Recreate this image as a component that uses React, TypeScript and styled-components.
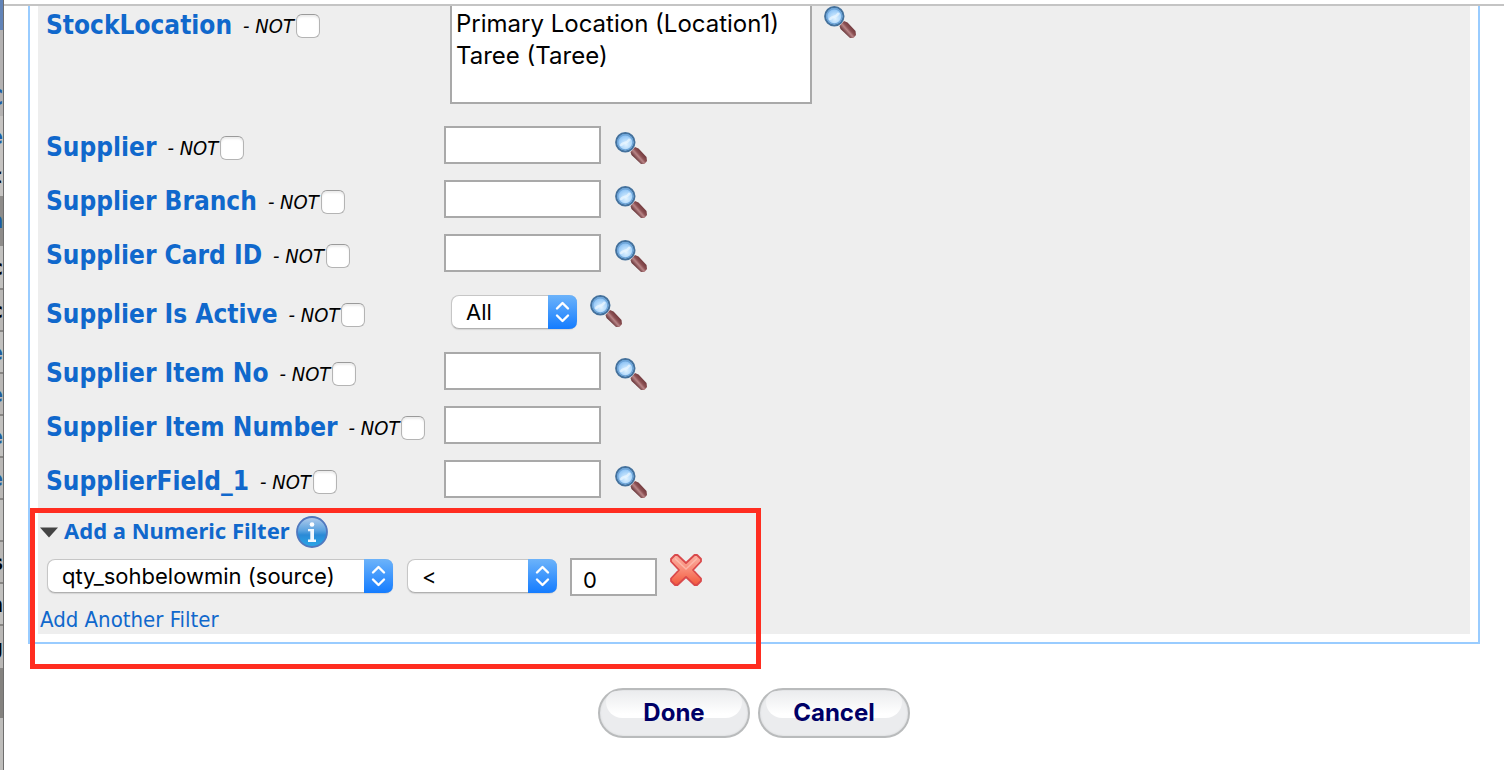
import React from "react";
import styled, { createGlobalStyle } from "styled-components";

const Global = createGlobalStyle`
  * { box-sizing: border-box; }
  body { margin: 0; background: #fff; font-family: "DejaVu Sans Condensed", Tahoma, "DejaVu Sans", sans-serif; color: #000; overflow-x: hidden; }
`;

const Page = styled.div`
  display: flex;
  min-height: 100vh;
`;
const Backdrop = styled.div`
  flex: none;
  width: 4px;
  border-right: 1px solid #6e6e6e;
  background: #bebdbb;
  overflow: hidden;
  display: flex;
  flex-direction: column;
`;
const Strip = styled.div<{ $h: number; $bg: string; $ink?: string; $line?: boolean }>`
  flex: none;
  height: ${(p) => p.$h}px;
  line-height: ${(p) => p.$h}px;
  background: ${(p) => p.$bg};
  color: ${(p) => p.$ink ?? "#000"};
  border-bottom: ${(p) => (p.$line ? "2px solid #888684" : "0")};
  font-size: 22px;
  font-weight: 700;
  white-space: nowrap;
  display: flex;
  justify-content: flex-end;
`;
const Dialog = styled.main`
  flex: 1;
  min-width: 0;
`;
const TopEdge = styled.div`
  height: 6px;
  border-bottom: 2px solid #c4c4c4;
`;
const Frame = styled.div`
  margin: 0 24px;
  padding: 0 8px 8px;
  border: 2px solid #99ccff;
  border-top: 0;
`;
const Panel = styled.div`
  background: #eee;
`;
const Row = styled.div<{ $h: number; $top?: boolean }>`
  display: grid;
  grid-template-columns: 398px 1fr;
  align-items: ${(p) => (p.$top ? "start" : "center")};
  height: ${(p) => p.$h}px;
  padding-left: 8px;
`;
const LabelCell = styled.div<{ $top?: boolean }>`
  display: flex;
  align-items: center;
  height: 40px;
  margin-top: ${(p) => (p.$top ? "0" : "6px")};
  white-space: nowrap;
`;
const Name = styled.span`
  color: #1068cc;
  font-size: 26px;
  line-height: 36px;
  padding-bottom: 2px;
  font-weight: 700;
`;
const Not = styled.label`
  display: flex;
  align-items: center;
  margin-left: 11px;
  font-size: 20px;
  font-style: italic;
`;
const Tick = styled.input`
  appearance: none;
  width: 24px;
  height: 24px;
  margin: 0 0 0 2px;
  border: 1px solid #b4b4b4;
  border-top-color: #9a9a9a;
  border-radius: 6px;
  background: #fff;
  box-shadow: inset 0 2px 2px #ececec;
`;
const FieldCell = styled.div<{ $inset?: boolean; $gap: number }>`
  display: flex;
  align-items: flex-start;
  gap: ${(p) => p.$gap}px;
  padding-left: ${(p) => (p.$inset ? 7 : 0)}px;
`;
const TextBox = styled.input<{ $w: number }>`
  width: ${(p) => p.$w}px;
  height: 38px;
  border: 2px solid #a9a9a9;
  border-radius: 0;
  padding: 6px 11px 0;
  background: #fff;
  font: 22px Inter, sans-serif;
`;
const ListBox = styled.select`
  width: 362px;
  height: 98px;
  margin-left: -1px;
  border: 2px solid #a9a9a9;
  border-top: 0;
  border-radius: 0;
  padding: 3px 0 0;
  background: #fff;
  color: #000;
  font: 24px Inter, sans-serif;
  overflow: hidden;
  outline: none;
  option { height: 32px; line-height: 32px; padding: 0 4px; }
`;
const IconButton = styled.button<{ $drop?: number }>`
  width: 32px;
  height: 32px;
  margin-top: ${(p) => p.$drop ?? 0}px;
  padding: 0;
  border: 0;
  background: none;
  svg { display: block; }
`;
const Picker = styled.span<{ $w: number }>`
  position: relative;
  display: inline-flex;
  width: ${(p) => p.$w}px;
  height: 34px;
  select {
    appearance: none;
    width: 100%;
    height: 34px;
    border: 1px solid #c6c6c6;
    border-bottom-color: #b0b0b0;
    border-radius: 8px;
    padding: 0 40px 0 14px;
    background: #fff;
    color: #000;
    font: 22px Inter, sans-serif;
    box-shadow: 0 1px 1px #d4d4d4;
  }
  svg { position: absolute; top: 0; right: 0; pointer-events: none; }
`;
const NumericFilter = styled.section`
  position: relative;
  height: 128px;
  padding-left: 2px;
`;
const Highlight = styled.div`
  position: absolute;
  top: 2px;
  left: -8px;
  width: 731px;
  height: 161px;
  border: 5px solid #ff2d20;
  pointer-events: none;
`;
const FilterTitle = styled.h2`
  display: flex;
  align-items: center;
  gap: 6px;
  height: 48px;
  margin: 0;
  padding-top: 4px;
  color: #1068cc;
  font: 700 22px "Noto Sans", sans-serif;
  line-height: 32px;
  span { padding-bottom: 4px; }
`;
const FilterRow = styled.div`
  display: flex;
  align-items: flex-start;
  gap: 13px;
  height: 52px;
  padding-left: 7px;
  ${Picker} { margin-top: 5px; }
  ${Picker} + ${Picker} { margin-left: 1px; }
  ${TextBox} { margin-top: 4px; }
`;
const AddLink = styled.a`
  display: block;
  color: #1068cc;
  font-size: 22px;
  line-height: 28px;
  text-decoration: none;
`;
const Actions = styled.div`
  display: flex;
  justify-content: center;
  gap: 8px;
  padding: 44px 0 32px;
`;
const Pill = styled.button`
  position: relative;
  width: 152px;
  height: 50px;
  border: 2px solid #b9bbbc;
  border-radius: 25px;
  padding: 0 0 2px;
  background: #ebecee;
  color: #000066;
  font: 700 24px Inter, sans-serif;
  box-shadow: inset 0 0 2px #d0d2d3;
  &::before {
    content: "";
    position: absolute;
    inset: 1px 6px 18px;
    border-radius: 16px 16px 24px 24px;
    background: linear-gradient(#ebecee, #fff 85%);
  }
  span { position: relative; }
`;

const Magnifier = () => (
  <svg width="32" height="32" viewBox="0 0 32 32" aria-hidden="true">
    <defs>
      <radialGradient id="lens" cx="55%" cy="62%" r="60%">
        <stop offset="0" stopColor="#e2f3ff" />
        <stop offset="0.5" stopColor="#b0d8fb" />
        <stop offset="1" stopColor="#7ab6f0" />
      </radialGradient>
      <linearGradient id="grip" gradientUnits="userSpaceOnUse" x1="20" y1="27" x2="28" y2="20">
        <stop offset="0" stopColor="#5e2c30" />
        <stop offset="0.4" stopColor="#b98587" />
        <stop offset="0.6" stopColor="#8d5154" />
        <stop offset="1" stopColor="#6d3539" />
      </linearGradient>
    </defs>
    <path d="M15.500 20 L20 15 L23.500 16.500 L31.500 25 L32 29 L29.500 32 L26 32 L16.500 23 Z" fill="url(#grip)" />
    <circle cx="10.300" cy="10.300" r="9.200" fill="url(#lens)" stroke="#44719c" strokeWidth="2" />
    <circle cx="10.300" cy="10.300" r="7.600" fill="none" stroke="#6ea5d8" strokeWidth="1.400" />
    <path d="M6 14 C7 9 10 14 15 7" fill="none" stroke="#eef8ff" strokeWidth="2.600" opacity="0.7" />
  </svg>
);

const Stepper = () => (
  <svg width="29" height="34" viewBox="0 0 29 34" aria-hidden="true">
    <defs>
      <linearGradient id="step" x1="0" y1="0" x2="0" y2="1">
        <stop offset="0" stopColor="#6cb3fa" />
        <stop offset="1" stopColor="#147cff" />
      </linearGradient>
    </defs>
    <path d="M0 0 H21 Q29 0 29 8 V26 Q29 34 21 34 H0 Z" fill="url(#step)" />
    <path d="M9 13.500 L14.500 8 L20 13.500 M9 20.500 L14.500 26 L20 20.500" fill="none" stroke="#fff" strokeWidth="2.400" strokeLinecap="round" strokeLinejoin="round" />
  </svg>
);

const Info = () => (
  <svg width="32" height="32" viewBox="0 0 32 32" aria-hidden="true">
    <defs>
      <linearGradient id="info" x1="0" y1="0" x2="0" y2="1">
        <stop offset="0" stopColor="#b4cdec" />
        <stop offset="0.45" stopColor="#5ba3e0" />
        <stop offset="0.6" stopColor="#2a8ad6" />
        <stop offset="1" stopColor="#2aa8e8" />
      </linearGradient>
    </defs>
    <circle cx="16" cy="16" r="15" fill="url(#info)" stroke="#5078be" strokeWidth="1.800" />
    <circle cx="16" cy="8.500" r="2.300" fill="#fff" />
    <path d="M12 13 H18 V23.500 H20 V26 H12 V23.500 H14.300 V15.200 H12 Z" fill="#f2f9ff" />
  </svg>
);

const Cross = () => (
  <svg width="32" height="32" viewBox="0 0 32 32" aria-hidden="true">
    <defs>
      <linearGradient id="cross" x1="0" y1="0" x2="0" y2="1">
        <stop offset="0" stopColor="#fbb0a2" />
        <stop offset="0.5" stopColor="#f98a75" />
        <stop offset="1" stopColor="#f2583c" />
      </linearGradient>
    </defs>
    <path d="M5 1 L7.500 1 L16 9 L24.500 1 L27 1 L31 5 L31 7.500 L23 16 L31 24.500 L31 27 L27 31 L24.500 31 L16 23 L7.500 31 L5 31 L1 27 L1 24.500 L9 16 L1 7.500 L1 5 Z" fill="url(#cross)" stroke="#d9494b" strokeWidth="1.800" strokeLinejoin="round" />
    <path d="M5 4.500 L16 15 L27 4.500" fill="none" stroke="#fdc4b8" strokeWidth="1.500" opacity="0.7" />
  </svg>
);

const Triangle = () => (
  <svg width="18" height="11" viewBox="0 0 18 11" aria-hidden="true">
    <path d="M0 0.500 H18 L9 10.500 Z" fill="#444" />
  </svg>
);

const NotTick = ({ name }: { name: string }) => (
  <Not>
    - NOT
    <Tick type="checkbox" aria-label={`${name} not`} />
  </Not>
);

const Search = ({ name, drop }: { name: string; drop?: number }) => (
  <IconButton type="button" aria-label={`Search ${name}`} $drop={drop}>
    <Magnifier />
  </IconButton>
);

const fields = [
  { name: "Supplier", search: true },
  { name: "Supplier Branch", search: true },
  { name: "Supplier Card ID", search: true },
  { name: "Supplier Is Active", search: true, choice: true },
  { name: "Supplier Item No", search: true },
  { name: "Supplier Item Number", search: false },
  { name: "SupplierField_1", search: true },
];

const strips: { h: number; bg: string; ink?: string; text?: string; line?: boolean }[] = [
  { h: 30, bg: "#6284b8" },
  { h: 50, bg: "#b4b2b2" },
  { h: 36, bg: "#b4b2b2", ink: "#1a5ba8", text: "C" },
  { h: 42, bg: "#c6c4c2", ink: "#1a5ba8", text: "e" },
  { h: 38, bg: "#c6c4c2", text: "<" },
  { h: 50, bg: "#8e8c8a", ink: "#1a5ba8", text: "m" },
  { h: 44, bg: "#c2c1bf", text: "c", line: true },
  { h: 42, bg: "#bab8b6", text: "c", line: true },
  { h: 42, bg: "#c2c1bf", ink: "#1f5c9c", text: "e", line: true },
  { h: 42, bg: "#bab8b6", ink: "#1f5c9c", text: "e", line: true },
  { h: 42, bg: "#c2c1bf", ink: "#1f5c9c", text: "e", line: true },
  { h: 42, bg: "#bab8b6", ink: "#1f5c9c", text: "e", line: true },
  { h: 42, bg: "#c2c1bf", line: true },
  { h: 42, bg: "#bab8b6", text: "s", line: true },
  { h: 42, bg: "#c2c1bf", text: "n", line: true },
  { h: 44, bg: "#bab8b6", text: "g", line: true },
  { h: 48, bg: "#84827f" },
];

export default function App() {
  return (
    <Page>
      <Global />
      <Backdrop aria-hidden="true">
        {strips.map((s, i) => (
          <Strip key={i} $h={s.h} $bg={s.bg} $ink={s.ink} $line={s.line}>
            {s.text}
          </Strip>
        ))}
      </Backdrop>
      <Dialog>
        <TopEdge />
        <Frame>
          <Panel>
            <Row $h={112} $top>
              <LabelCell $top>
                <Name>StockLocation</Name>
                <NotTick name="StockLocation" />
              </LabelCell>
              <FieldCell $inset $gap={12}>
                <ListBox multiple aria-label="StockLocation">
                  <option>Primary Location (Location1)</option>
                  <option>Taree (Taree)</option>
                </ListBox>
                <Search name="StockLocation" />
              </FieldCell>
            </Row>
            {fields.map((f) => (
              <Row key={f.name} $h={f.choice ? 64 : 54}>
                <LabelCell>
                  <Name>{f.name}</Name>
                  <NotTick name={f.name} />
                </LabelCell>
                {f.choice ? (
                  <FieldCell $inset $gap={13}>
                    <Picker $w={126}>
                      <select aria-label={f.name} defaultValue="All">
                        <option>All</option>
                      </select>
                      <Stepper />
                    </Picker>
                    <Search name={f.name} />
                  </FieldCell>
                ) : (
                  <FieldCell $gap={14}>
                    <TextBox type="text" $w={157} aria-label={f.name} />
                    {f.search && <Search name={f.name} drop={6} />}
                  </FieldCell>
                )}
              </Row>
            ))}
            <NumericFilter>
              <FilterTitle>
                <Triangle />
                <span>Add a Numeric Filter</span>
                <Info />
              </FilterTitle>
              <FilterRow>
                <Picker $w={346}>
                  <select aria-label="Filter field">
                    <option>qty_sohbelowmin (source)</option>
                  </select>
                  <Stepper />
                </Picker>
                <Picker $w={150}>
                  <select aria-label="Comparison">
                    <option>&lt;</option>
                  </select>
                  <Stepper />
                </Picker>
                <TextBox type="text" $w={87} aria-label="Value" defaultValue="0" />
                <IconButton type="button" aria-label="Remove filter">
                  <Cross />
                </IconButton>
              </FilterRow>
              <AddLink href="#add">Add Another Filter</AddLink>
              <Highlight />
            </NumericFilter>
          </Panel>
        </Frame>
        <Actions>
          <Pill type="button"><span>Done</span></Pill>
          <Pill type="button"><span>Cancel</span></Pill>
        </Actions>
      </Dialog>
    </Page>
  );
}
